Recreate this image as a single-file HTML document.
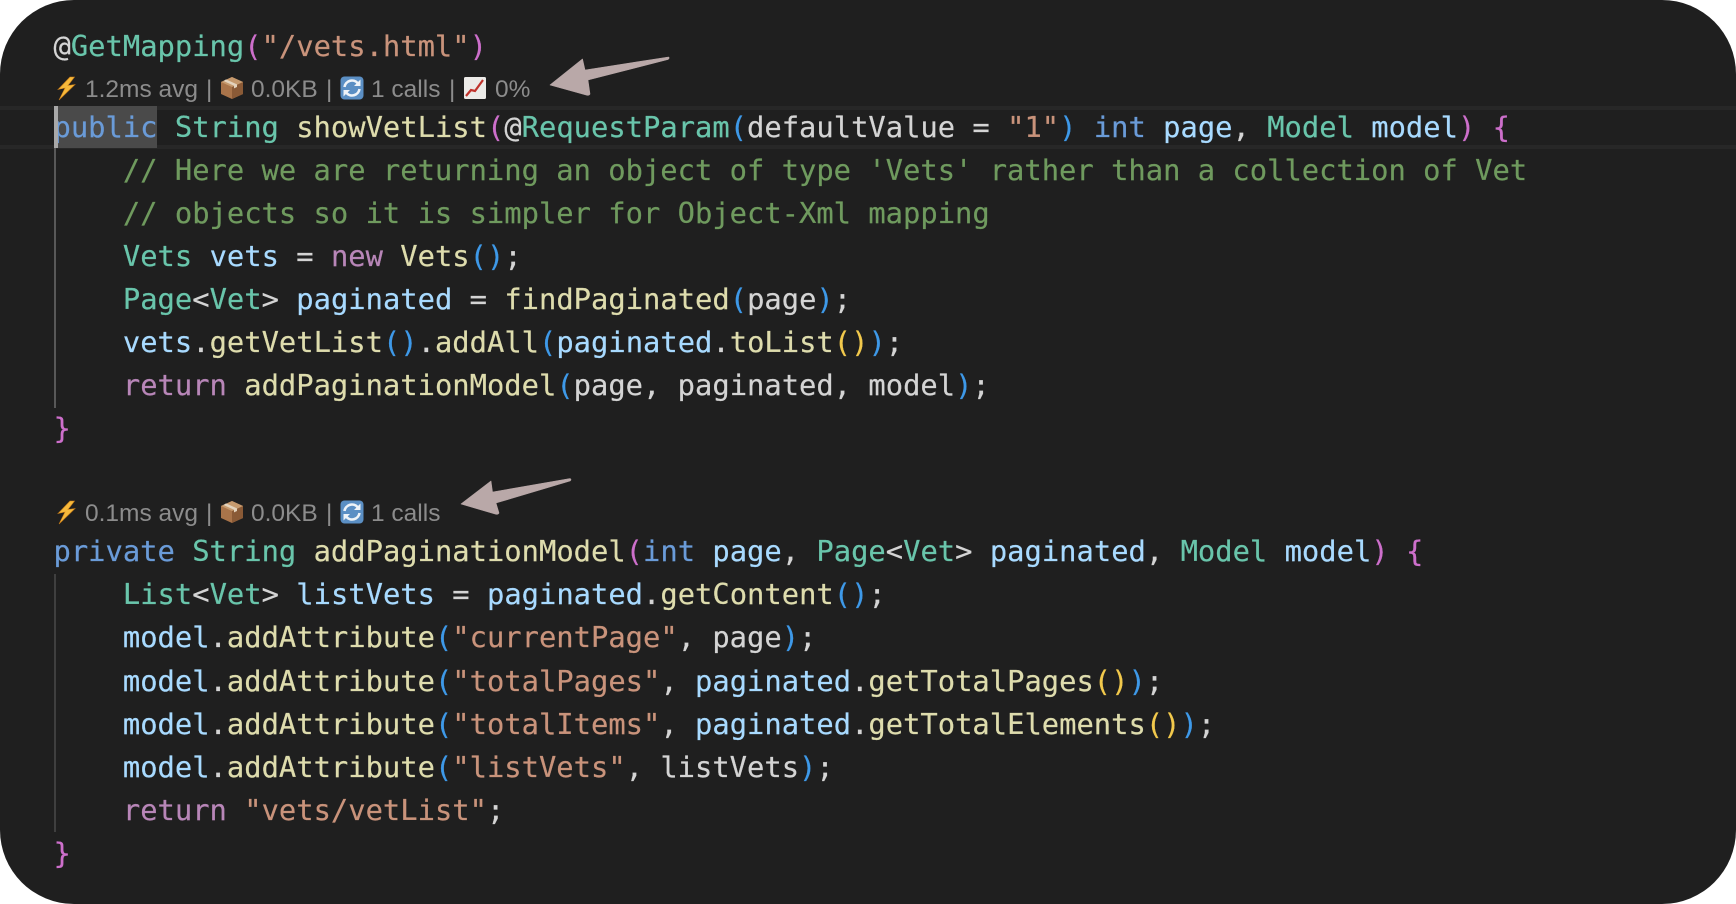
<!DOCTYPE html>
<html><head><meta charset="utf-8"><style>
html,body{margin:0;padding:0;background:#fff}
#p{position:relative;width:1736px;height:904px;background:#1f1f1f;border-radius:74px;overflow:hidden}
.l{position:absolute;left:53.5px;height:43px;line-height:43px;font-family:"DejaVu Sans Mono",monospace;font-size:28.8px;white-space:pre;color:#d4d4d4;z-index:2;-webkit-text-stroke:0.2px currentColor}
.k{color:#6a9bd8}.t{color:#69c5ab}.f{color:#dedcad}.v{color:#a8daff}.s{color:#c9937b}.c{color:#6f9a5e}.r{color:#b886b8}
.pu{color:#cd6fcb}.bl{color:#3e99e8}.go{color:#f2c94c}.o{color:#d4d4d4}
.m{position:absolute;font-family:"Liberation Sans",sans-serif;font-size:24.5px;line-height:28px;color:#8c8c8c;white-space:pre;z-index:2}
.a{position:absolute;z-index:1}
svg{position:absolute;z-index:2;overflow:visible}
</style></head><body><div id="p">
<div class="a" style="left:0;right:0;top:106px;height:4px;background:#272727"></div>
<div class="a" style="left:0;right:0;top:145px;height:4px;background:#272727"></div>
<div class="a" style="left:54px;width:103px;top:106px;height:42px;background:#4a4a4a"></div>
<div class="a" style="left:54px;width:4px;top:106px;height:42px;background:#a8a8a8;z-index:3"></div>
<div class="a" style="left:54px;width:2px;top:148px;height:260px;background:#585858"></div>
<div class="a" style="left:54px;width:2px;top:574px;height:258px;background:#3f3f3f"></div>

<div class="l" style="top:25px"><span class="o">@</span><span class="t">GetMapping</span><span class="pu">(</span><span class="s">"/vets.html"</span><span class="pu">)</span></div>
<div class="l" style="top:105.5px"><span class="k">public</span> <span class="t">String</span> <span class="f">showVetList</span><span class="pu">(</span><span class="o">@</span><span class="t">RequestParam</span><span class="bl">(</span><span class="o">defaultValue = </span><span class="s">"1"</span><span class="bl">)</span> <span class="k">int</span> <span class="v">page</span>, <span class="t">Model</span> <span class="v">model</span><span class="pu">)</span> <span class="pu">{</span></div>
<div class="l" style="top:149px"><span class="c">    // Here we are returning an object of type 'Vets' rather than a collection of Vet</span></div>
<div class="l" style="top:192px"><span class="c">    // objects so it is simpler for Object-Xml mapping</span></div>
<div class="l" style="top:235px">    <span class="t">Vets</span> <span class="v">vets</span> = <span class="r">new</span> <span class="f">Vets</span><span class="bl">()</span>;</div>
<div class="l" style="top:278px">    <span class="t">Page</span>&lt;<span class="t">Vet</span>&gt; <span class="v">paginated</span> = <span class="f">findPaginated</span><span class="bl">(</span><span class="o">page</span><span class="bl">)</span>;</div>
<div class="l" style="top:321px">    <span class="v">vets</span>.<span class="f">getVetList</span><span class="bl">()</span>.<span class="f">addAll</span><span class="bl">(</span><span class="v">paginated</span>.<span class="f">toList</span><span class="go">()</span><span class="bl">)</span>;</div>
<div class="l" style="top:364px">    <span class="r">return</span> <span class="f">addPaginationModel</span><span class="bl">(</span>page, paginated, model<span class="bl">)</span>;</div>
<div class="l" style="top:406.5px"><span class="pu">}</span></div>

<div class="l" style="top:529.5px"><span class="k">private</span> <span class="t">String</span> <span class="f">addPaginationModel</span><span class="pu">(</span><span class="k">int</span> <span class="v">page</span>, <span class="t">Page</span>&lt;<span class="t">Vet</span>&gt; <span class="v">paginated</span>, <span class="t">Model</span> <span class="v">model</span><span class="pu">)</span> <span class="pu">{</span></div>
<div class="l" style="top:573px">    <span class="t">List</span>&lt;<span class="t">Vet</span>&gt; <span class="v">listVets</span> = <span class="v">paginated</span>.<span class="f">getContent</span><span class="bl">()</span>;</div>
<div class="l" style="top:616px">    <span class="v">model</span>.<span class="f">addAttribute</span><span class="bl">(</span><span class="s">"currentPage"</span>, page<span class="bl">)</span>;</div>
<div class="l" style="top:660px">    <span class="v">model</span>.<span class="f">addAttribute</span><span class="bl">(</span><span class="s">"totalPages"</span>, <span class="v">paginated</span>.<span class="f">getTotalPages</span><span class="go">()</span><span class="bl">)</span>;</div>
<div class="l" style="top:703px">    <span class="v">model</span>.<span class="f">addAttribute</span><span class="bl">(</span><span class="s">"totalItems"</span>, <span class="v">paginated</span>.<span class="f">getTotalElements</span><span class="go">()</span><span class="bl">)</span>;</div>
<div class="l" style="top:746px">    <span class="v">model</span>.<span class="f">addAttribute</span><span class="bl">(</span><span class="s">"listVets"</span>, listVets<span class="bl">)</span>;</div>
<div class="l" style="top:789px">    <span class="r">return</span> <span class="s">"vets/vetList"</span>;</div>
<div class="l" style="top:831.5px"><span class="pu">}</span></div>

<!-- stats line 1 -->
<svg style="left:56px;top:77px" width="20" height="23" viewBox="0 0 20 23"><path d="M14 0 L2 12.5 L9 11 L3 23 L19 7.5 L12 8.5 L18.5 0Z" fill="#f6b93b" stroke="#c97c18" stroke-width="0.6"/></svg>
<div class="m" style="left:85px;top:75.5px">1.2ms avg</div>
<div class="m" style="left:206px;top:75.5px">|</div>
<svg style="left:220px;top:76px" width="24" height="24" viewBox="0 0 24 24"><path d="M12 1 L23 6 V18 L12 23 L1 18 V6Z" fill="#a9744a"/><path d="M12 11 L23 6 V18 L12 23Z" fill="#8a5a36"/><path d="M12 1 L23 6 L12 11 L1 6Z" fill="#c69a6e"/><path d="M6 3.4 L17 8.4 V11 L14 12.4 V9.7 L3.5 5Z" fill="#e3d3bd"/></svg>
<div class="m" style="left:251px;top:75.5px">0.0KB</div>
<div class="m" style="left:326px;top:75.5px">|</div>
<svg style="left:340px;top:76px" width="24" height="24" viewBox="0 0 24 24"><rect x="0.5" y="0.5" width="23" height="23" rx="4" fill="#5b8fc4"/><path d="M4.5 11 A7.5 7.5 0 0 1 17.5 7" fill="none" stroke="#eef3f8" stroke-width="2.6"/><path d="M20.5 3.5 V10 H14Z" fill="#eef3f8"/><path d="M19.5 13 A7.5 7.5 0 0 1 6.5 17" fill="none" stroke="#eef3f8" stroke-width="2.6"/><path d="M3.5 20.5 V14 H10Z" fill="#eef3f8"/></svg>
<div class="m" style="left:371px;top:75.5px">1 calls</div>
<div class="m" style="left:449px;top:75.5px">|</div>
<svg style="left:464px;top:77px" width="22" height="22" viewBox="0 0 22 22"><rect x="0" y="0" width="22" height="22" rx="1.5" fill="#ecebe8"/><path d="M2 19 L7 13 L11 14 L19 3" fill="none" stroke="#c0332c" stroke-width="2.2"/></svg>
<div class="m" style="left:495px;top:75.5px">0%</div>
<svg style="left:0;top:0" width="1" height="1"><path d="M550 85 L582.5 59 L585 70 L668.5 57 Q670 58 668 59.5 L588 80 L590 94 Q589 96 586 95Z" fill="#b9a8a8" stroke="#b9a8a8" stroke-width="0.6" stroke-linejoin="round"/></svg>

<!-- stats line 2 -->
<svg style="left:56px;top:501px" width="20" height="23" viewBox="0 0 20 23"><path d="M14 0 L2 12.5 L9 11 L3 23 L19 7.5 L12 8.5 L18.5 0Z" fill="#f6b93b" stroke="#c97c18" stroke-width="0.6"/></svg>
<div class="m" style="left:85px;top:499.5px">0.1ms avg</div>
<div class="m" style="left:206px;top:499.5px">|</div>
<svg style="left:220px;top:500px" width="24" height="24" viewBox="0 0 24 24"><path d="M12 1 L23 6 V18 L12 23 L1 18 V6Z" fill="#a9744a"/><path d="M12 11 L23 6 V18 L12 23Z" fill="#8a5a36"/><path d="M12 1 L23 6 L12 11 L1 6Z" fill="#c69a6e"/><path d="M6 3.4 L17 8.4 V11 L14 12.4 V9.7 L3.5 5Z" fill="#e3d3bd"/></svg>
<div class="m" style="left:251px;top:499.5px">0.0KB</div>
<div class="m" style="left:326px;top:499.5px">|</div>
<svg style="left:340px;top:500px" width="24" height="24" viewBox="0 0 24 24"><rect x="0.5" y="0.5" width="23" height="23" rx="4" fill="#5b8fc4"/><path d="M4.5 11 A7.5 7.5 0 0 1 17.5 7" fill="none" stroke="#eef3f8" stroke-width="2.6"/><path d="M20.5 3.5 V10 H14Z" fill="#eef3f8"/><path d="M19.5 13 A7.5 7.5 0 0 1 6.5 17" fill="none" stroke="#eef3f8" stroke-width="2.6"/><path d="M3.5 20.5 V14 H10Z" fill="#eef3f8"/></svg>
<div class="m" style="left:371px;top:499.5px">1 calls</div>
<svg style="left:0;top:0" width="1" height="1"><path d="M461 504 L491 481 L492.5 492 L570 478.5 Q572 479.5 570 481 L496 503 L499 513 Q498 515 495 514Z" fill="#b9a8a8" stroke="#b9a8a8" stroke-width="0.6" stroke-linejoin="round"/></svg>
</div></body></html>
